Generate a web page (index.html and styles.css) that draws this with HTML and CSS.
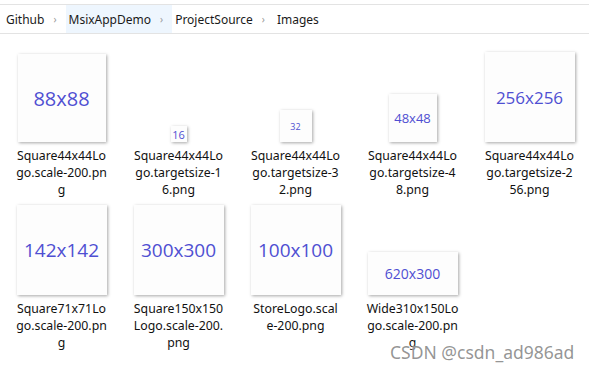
FILE: index.html
```html
<!DOCTYPE html>
<html lang="en">
<head>
    <meta charset="UTF-8">
    <title>Images</title>
    <link rel="stylesheet" href="styles.css">
</head>
<body>
    <!-- 地址栏 -->
    <div class="crumbs">
        <span class="crumb">Github<span class="chev">›</span></span>
        <span class="crumb active">MsixAppDemo<span class="chev">›</span></span>
        <span class="crumb">ProjectSource<span class="chev">›</span></span>
        <span class="crumb">Images</span>
    </div>

    <!-- 文件列表 -->
    <div class="grid">
        <div class="tile">
            <div class="thumb-area"><div class="thumb s88 f22">88x88</div></div>
            <div class="label">Square44x44Lo<br>go.scale-200.pn<br>g</div>
        </div>
        <div class="tile">
            <div class="thumb-area"><div class="thumb s16 f11">16</div></div>
            <div class="label">Square44x44Lo<br>go.targetsize-1<br>6.png</div>
        </div>
        <div class="tile">
            <div class="thumb-area"><div class="thumb s32 f10">32</div></div>
            <div class="label">Square44x44Lo<br>go.targetsize-3<br>2.png</div>
        </div>
        <div class="tile">
            <div class="thumb-area"><div class="thumb s48 f14">48x48</div></div>
            <div class="label">Square44x44Lo<br>go.targetsize-4<br>8.png</div>
        </div>
        <div class="tile">
            <div class="thumb-area"><div class="thumb s90 f18">256x256</div></div>
            <div class="label">Square44x44Lo<br>go.targetsize-2<br>56.png</div>
        </div>
        <div class="tile">
            <div class="thumb-area"><div class="thumb s90 f20">142x142</div></div>
            <div class="label">Square71x71Lo<br>go.scale-200.pn<br>g</div>
        </div>
        <div class="tile">
            <div class="thumb-area"><div class="thumb s90 f20">300x300</div></div>
            <div class="label">Square150x150<br>Logo.scale-200.<br>png</div>
        </div>
        <div class="tile">
            <div class="thumb-area"><div class="thumb s90 f20">100x100</div></div>
            <div class="label">StoreLogo.scal<br>e-200.png</div>
        </div>
        <div class="tile">
            <div class="thumb-area"><div class="thumb wide f15">620x300</div></div>
            <div class="label">Wide310x150Lo<br>go.scale-200.pn<br>g</div>
        </div>
    </div>

    <div class="watermark">CSDN @csdn_ad986ad</div>
</body>
</html>
```

FILE: styles.css
```css
body {
    margin: 0;
    background: #fff;
    color: #1a1a1a;
    font-family: "Noto Sans", "Open Sans", "Noto Sans CJK SC", sans-serif;
    font-size: 12px;
    position: relative;
    height: 367px;
    overflow: hidden;
}
.crumbs {
    margin-top: 4px;
    height: 28px;
    border-top: 1px solid #e3e3e3;
    border-bottom: 1px solid #e3e3e3;
    display: flex;
    align-items: stretch;
    padding-left: 3px;
}
.crumb {
    display: flex;
    align-items: center;
    padding: 0 9px 0 3px;
}
.crumb.active {
    background: #eef6fe;
}
.chev {
    color: #9a9a9a;
    font-size: 10px;
    margin-left: 9px;
}
.grid {
    margin-top: 18px;
    padding-left: 3px;
    display: grid;
    grid-template-columns: repeat(5, 117px);
    row-gap: 7px;
}
.tile {
    display: flex;
    flex-direction: column;
    align-items: center;
}
.thumb-area {
    height: 90px;
    width: 100%;
    display: flex;
    align-items: flex-end;
    justify-content: center;
}
.thumb {
    background: #fdfdfd;
    box-shadow: 1px 1px 3px rgba(0, 0, 0, 0.35);
    display: flex;
    align-items: center;
    justify-content: center;
    color: #4f4fd2;
    font-family: "Open Sans", "Noto Sans", sans-serif;
}
.s16 { width: 16px; height: 16px; }
.s32 { width: 32px; height: 32px; }
.s48 { width: 48px; height: 48px; }
.s88 { width: 88px; height: 88px; }
.s90 { width: 90px; height: 90px; }
.wide { width: 90px; height: 43px; }
.f10 { font-size: 9px; }
.f11 { font-size: 11px; }
.f14 { font-size: 13px; }
.f15 { font-size: 14px; }
.f18 { font-size: 17px; }
.f20 { font-size: 19px; }
.f22 { font-size: 20px; }
.label {
    margin-top: 5px;
    line-height: 17px;
    font-size: 12.3px;
    text-align: center;
    white-space: nowrap;
    color: #111;
}
.watermark {
    position: absolute;
    left: 390px;
    top: 340px;
    font-size: 17.5px;
    color: rgba(130, 130, 130, 0.85);
    text-shadow: 0 0 2px #fff;
    font-family: "Noto Sans", sans-serif;
}
```
